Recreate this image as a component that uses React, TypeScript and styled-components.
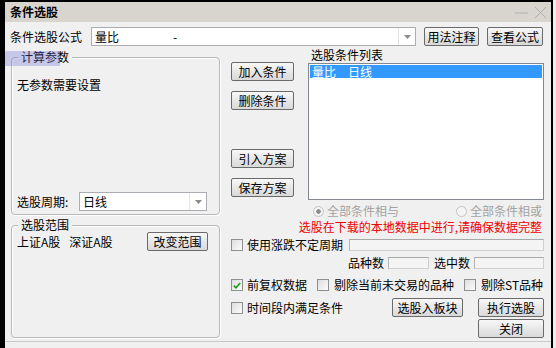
import React from "react";
import styled, { createGlobalStyle } from "styled-components";

const GlobalStyle = createGlobalStyle`
  html, body { margin: 0; padding: 0; background: #f0f0f0; }
  body {
    font-family: "Noto Sans CJK SC", "Noto Sans", sans-serif;
    font-size: 12px;
    line-height: 14px;
    color: #000;
  }
  * { box-sizing: border-box; }
`;

const Window = styled.div`
  position: relative;
  width: 553px;
  height: 348px;
  border-left: 5px solid #000;
  border-top: 2px solid #000;
  border-right: 2px solid #000;
  background: #f0f0f0;
  display: flex;
  flex-direction: column;
`;

const TitleBar = styled.div`
  height: 20px;
  flex: none;
  background: #d8d5cf;
  display: flex;
  align-items: center;
  justify-content: space-between;
  padding: 0 4px 0 5px;
`;

const Title = styled.div`
  font-weight: bold;
  line-height: 14px;
`;

const WinControls = styled.div`
  display: flex;
  align-items: center;
  gap: 6px;
`;

const Body = styled.div`
  flex: 1;
  padding: 5px 8px 0 5px;
  display: flex;
  flex-direction: column;
`;

const BottomLine = styled.div`
  height: 1px;
  margin: 3px -8px 0 -5px;
  background: #c9c9c9;
`;

const Row = styled.div<{ $mt?: number; $h?: number; $justify?: string; $gap?: number }>`
  display: flex;
  align-items: center;
  margin-top: ${(p) => p.$mt ?? 0}px;
  height: ${(p) => p.$h ?? 14}px;
  justify-content: ${(p) => p.$justify ?? "flex-start"};
  gap: ${(p) => p.$gap ?? 0}px;
  flex: none;
`;

const Label = styled.span<{ $w?: number; $gray?: boolean; $ml?: number }>`
  white-space: pre;
  flex: none;
  width: ${(p) => (p.$w ? `${p.$w}px` : "auto")};
  margin-left: ${(p) => p.$ml ?? 0}px;
  color: ${(p) => (p.$gray ? "#a3a3a3" : "#000")};
`;

const Markets = styled.span`
  display: flex;
  gap: 9px;
`;

const Button = styled.button<{ $w: number; $ml?: number }>`
  flex: none;
  width: ${(p) => p.$w}px;
  margin: 0 0 0 ${(p) => p.$ml ?? 0}px;
  height: 19px;
  padding: 0;
  border: 1px solid #6a6a6a;
  border-radius: 2px;
  background: linear-gradient(#f8f8f8, #e6e6e6 55%, #d9d9d9);
  font: inherit;
  font-size: 12px;
  line-height: 14px;
  color: #000;
  display: flex;
  align-items: center;
  justify-content: center;
`;

const Combo = styled.div<{ $w: number }>`
  flex: none;
  width: ${(p) => p.$w}px;
  height: 19px;
  border: 1px solid #abadb3;
  background: #fff;
  display: flex;
  align-items: stretch;
`;

const ComboText = styled.div`
  flex: 1;
  display: flex;
  align-items: center;
  padding-left: 3px;
  white-space: pre;
`;

const Dash = styled.span`
  margin-left: 54px;
`;

const ComboArrow = styled.div`
  width: 17px;
  flex: none;
  border-left: 1px solid #e3e3e3;
  display: flex;
  align-items: center;
  justify-content: center;
`;

const Main = styled.div`
  display: flex;
  gap: 11px;
  margin-top: 4px;
`;

const LeftCol = styled.div`
  width: 210px;
  flex: none;
  display: flex;
  flex-direction: column;
  gap: 10px;
  padding-top: 7px;
`;

const Group = styled.div<{ $h: number }>`
  position: relative;
  margin-left: 1px;
  width: 209px;
  height: ${(p) => p.$h}px;
  border: 1px solid #b9b9b9;
  border-radius: 4px;
  box-shadow: inset 1px 1px 0 #fff, 1px 1px 0 #fff;
`;

const Legend = styled.div`
  position: absolute;
  top: -8px;
  left: 6px;
  padding: 0 3px;
  background: #f0f0f0;
  line-height: 14px;
`;

const GroupBody = styled.div<{ $pad: string; $between?: boolean }>`
  height: 100%;
  padding: ${(p) => p.$pad};
  display: flex;
  flex-direction: column;
  justify-content: ${(p) => (p.$between ? "space-between" : "flex-start")};
`;

const RightCol = styled.div`
  width: 313px;
  flex: none;
  display: flex;
  flex-direction: column;
`;

const TopSection = styled.div`
  display: flex;
  gap: 14px;
`;

const ButtonCol = styled.div`
  width: 63px;
  display: flex;
  flex-direction: column;
  padding-top: 12px;
`;

const ListSection = styled.div`
  flex: 1;
  display: flex;
  flex-direction: column;
`;

const ListLabel = styled.div`
  height: 13px;
  line-height: 10px;
  padding-left: 3px;
`;

const ListBox = styled.div`
  height: 137px;
  border: 1px solid #828790;
  background: #fff;
  padding: 1px;
`;

const ListItem = styled.div<{ $selected?: boolean }>`
  height: 13px;
  line-height: 13px;
  padding-left: 2px;
  background: ${(p) => (p.$selected ? "#3399ff" : "transparent")};
  color: ${(p) => (p.$selected ? "#fff" : "#000")};
  display: flex;
  gap: 12px;
`;

const RadioRow = styled.div`
  display: grid;
  grid-template-columns: 143px 1fr;
  margin-top: 4px;
  padding-left: 82px;
  height: 14px;
  align-items: center;
`;

const Option = styled.label<{ $gap?: number }>`
  display: flex;
  align-items: center;
  gap: ${(p) => p.$gap ?? 4}px;
  flex: none;
`;

const Radio = styled.span<{ $on?: boolean }>`
  width: 11px;
  height: 11px;
  border-radius: 50%;
  border: 1px solid #c4c4c4;
  background: radial-gradient(circle, ${(p) => (p.$on ? "#8a8a8a 0 2px, #f4f4f4 2.5px" : "#f4f4f4 0")});
  flex: none;
`;

const Warn = styled.div`
  margin-top: 2px;
  height: 14px;
  text-align: right;
  padding-right: 2px;
  color: #ee0000;
  white-space: nowrap;
`;

const Check = styled.span`
  width: 12px;
  height: 12px;
  flex: none;
  border: 1px solid #8e8f8f;
  background: linear-gradient(135deg, #dedede, #fbfbfb);
  display: flex;
  align-items: center;
  justify-content: center;
`;

const Field = styled.div<{ $w: number; $ml?: number }>`
  flex: none;
  width: ${(p) => p.$w}px;
  margin-left: ${(p) => p.$ml ?? 0}px;
  height: 12px;
  border: 1px solid #d0d0d0;
  border-top-color: #a8a8a8;
  border-left-color: #b4b4b4;
  background: #f4f4f4;
`;

const Spacer = styled.div`
  flex: 1;
`;

const Selection = styled.div`
  position: absolute;
  left: 0;
  top: 49px;
  width: 55px;
  height: 15px;
  background: rgba(110, 110, 215, 0.32);
`;

const DownArrow = () => (
  <svg width="7" height="4" viewBox="0 0 7 4">
    <path d="M0 0h7L3.5 4z" fill="#8a8a8a" />
  </svg>
);

const CheckMark = () => (
  <svg width="8" height="7" viewBox="0 0 8 7">
    <path d="M0.8 3.6 L3 5.8 L7.2 1" stroke="#1e9b1e" strokeWidth="1.6" fill="none" />
  </svg>
);

const App: React.FC = () => (
  <>
    <GlobalStyle />
    <Window>
      <TitleBar>
        <Title>条件选股</Title>
        <WinControls>
          <svg width="13" height="13" viewBox="0 0 13 13">
            <path d="M0 7h13" stroke="#b0b0b0" strokeWidth="1" />
          </svg>
          <svg width="13" height="13" viewBox="0 0 13 13">
            <path d="M1 1L12 12M12 1L1 12" stroke="#b0b0b0" strokeWidth="1" />
          </svg>
        </WinControls>
      </TitleBar>
      <Body>
        <Row $h={19}>
          <Label $w={81}>条件选股公式</Label>
          <Combo $w={325}>
            <ComboText>
              量比<Dash>-</Dash>
            </ComboText>
            <ComboArrow>
              <DownArrow />
            </ComboArrow>
          </Combo>
          <Button $w={55} $ml={8}>用法注释</Button>
          <Button $w={56} $ml={8}>查看公式</Button>
        </Row>
        <Main>
          <LeftCol>
            <Group $h={158}>
              <Legend>计算参数</Legend>
              <GroupBody $pad="20px 11px 3px 5px" $between>
                <Label>无参数需要设置</Label>
                <Row $h={19}>
                  <Label $w={62}>选股周期:</Label>
                  <Combo $w={128}>
                    <ComboText>日线</ComboText>
                    <ComboArrow>
                      <DownArrow />
                    </ComboArrow>
                  </Combo>
                </Row>
              </GroupBody>
            </Group>
            <Group $h={113}>
              <Legend>选股范围</Legend>
              <GroupBody $pad="6px 11px 0 5px">
                <Row $h={19} $justify="space-between">
                  <Markets>
                    <span>上证A股</span>
                    <span>深证A股</span>
                  </Markets>
                  <Button $w={61}>改变范围</Button>
                </Row>
              </GroupBody>
            </Group>
          </LeftCol>
          <RightCol>
            <TopSection>
              <ButtonCol>
                <Row $h={19}>
                  <Button $w={63}>加入条件</Button>
                </Row>
                <Row $h={19} $mt={10}>
                  <Button $w={63}>删除条件</Button>
                </Row>
                <Row $h={19} $mt={39}>
                  <Button $w={63}>引入方案</Button>
                </Row>
                <Row $h={19} $mt={10}>
                  <Button $w={63}>保存方案</Button>
                </Row>
              </ButtonCol>
              <ListSection>
                <ListLabel>选股条件列表</ListLabel>
                <ListBox>
                  <ListItem $selected>
                    <span>量比</span>
                    <span>日线</span>
                  </ListItem>
                </ListBox>
              </ListSection>
            </TopSection>
            <RadioRow>
              <Option $gap={3}>
                <Radio $on />
                <Label $gray>全部条件相与</Label>
              </Option>
              <Option $gap={3}>
                <Radio />
                <Label $gray>全部条件相或</Label>
              </Option>
            </RadioRow>
            <Warn>选股在下载的本地数据中进行,请确保数据完整</Warn>
            <Row $mt={5} $h={12}>
              <Option>
                <Check />
                <Label>使用涨跌不定周期</Label>
              </Option>
              <Spacer />
              <Field $w={195} />
            </Row>
            <Row $mt={6} $h={12} $justify="flex-end">
              <Label>品种数</Label>
              <Field $w={41} $ml={4} />
              <Label $ml={5}>选中数</Label>
              <Field $w={70} $ml={4} />
            </Row>
            <Row $mt={10} $h={12} $gap={10}>
              <Option>
                <Check>
                  <CheckMark />
                </Check>
                <Label>前复权数据</Label>
              </Option>
              <Option $gap={5}>
                <Check />
                <Label>剔除当前未交易的品种</Label>
              </Option>
              <Option $gap={5}>
                <Check />
                <Label>剔除ST品种</Label>
              </Option>
            </Row>
            <Row $mt={7} $h={19}>
              <Option>
                <Check />
                <Label>时间段内满足条件</Label>
              </Option>
              <Spacer />
              <Button $w={71}>选股入板块</Button>
              <Button $w={66} $ml={15}>执行选股</Button>
            </Row>
            <Row $mt={2} $h={19} $justify="flex-end">
              <Button $w={66}>关闭</Button>
            </Row>
          </RightCol>
        </Main>
        <BottomLine />
      </Body>
      <Selection />
    </Window>
  </>
);

export default App;
